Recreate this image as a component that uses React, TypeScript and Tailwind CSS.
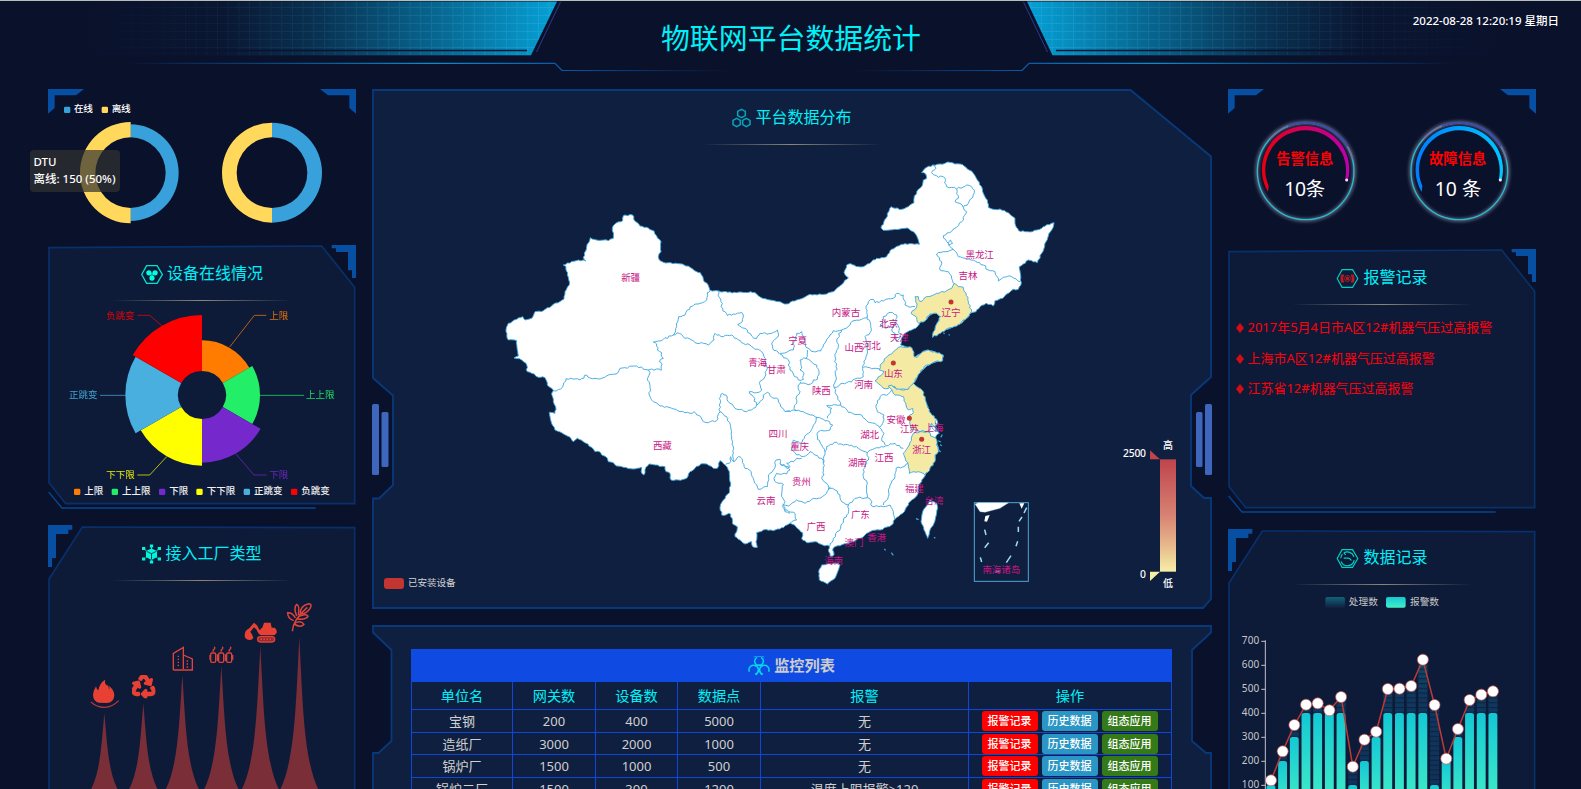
import React from "react";
import { FaRecycle } from "react-icons/fa";

const CYAN = "#00f0f8";

type TProps = {
  x: number;
  y: number;
  s: number;
  c: string;
  w?: number;
  a?: "start" | "middle" | "end";
  b?: number;
  children: string;
};

function T({ x, y, s, c, w, a = "start", b = 400, children }: TProps) {
  return (
    <text x={x} y={y} fontSize={s} fill={c} fontWeight={b} textAnchor={a} textLength={w} dominantBaseline="central">
      {children}
    </text>
  );
}

function HeaderArt() {
  const fade = (id: string, color: string, dir: number) => (
    <linearGradient id={id} x1={dir > 0 ? "0" : "1"} x2={dir > 0 ? "1" : "0"} y1="0" y2="0">
      <stop offset="0" stopColor={color} stopOpacity="0" />
      <stop offset="0.3" stopColor={color} stopOpacity="0.04" />
      <stop offset="0.5" stopColor={color} stopOpacity="0.23" />
      <stop offset="0.72" stopColor={color} stopOpacity="0.55" />
      <stop offset="1" stopColor={color} stopOpacity="1" />
    </linearGradient>
  );
  return (
    <svg className="absolute inset-0" width="1581" height="88" viewBox="0 1 1581 88" fill="none">
      <defs>
        {fade("hl", "#05a1d6", 1)}
        {fade("hr", "#05a1d6", -1)}
        <pattern id="grid" width="10.7" height="8" patternUnits="userSpaceOnUse" y="7" x="3">
          <path d="M0 .5H10.7M.5 0V8" stroke="#7fd6ff" strokeOpacity="0.16" />
        </pattern>
        <linearGradient id="maskL">
          <stop offset="0" stopColor="#fff" stopOpacity="0" />
          <stop offset="1" stopColor="#fff" />
        </linearGradient>
        <linearGradient id="maskR">
          <stop offset="0" stopColor="#fff" />
          <stop offset="1" stopColor="#fff" stopOpacity="0" />
        </linearGradient>
        <mask id="ml">
          <rect x="80" y="0" width="478" height="60" fill="url(#maskL)" />
        </mask>
        <mask id="mr">
          <rect x="1025" y="0" width="478" height="60" fill="url(#maskR)" />
        </mask>
        <linearGradient id="lineL" gradientUnits="userSpaceOnUse" x1="128" x2="560" y1="0" y2="0">
          <stop offset="0" stopColor="#0a4a9c" stopOpacity="0" />
          <stop offset="0.2" stopColor="#0a3f80" stopOpacity="0.7" />
          <stop offset="0.7" stopColor="#0790cc" />
          <stop offset="1" stopColor="#0b59a6" />
        </linearGradient>
        <linearGradient id="lineR" gradientUnits="userSpaceOnUse" x1="1455" x2="1024" y1="0" y2="0">
          <stop offset="0" stopColor="#0a4a9c" stopOpacity="0" />
          <stop offset="0.2" stopColor="#0a3f80" stopOpacity="0.7" />
          <stop offset="0.7" stopColor="#0790cc" />
          <stop offset="1" stopColor="#0b59a6" />
        </linearGradient>
        <linearGradient id="lowL" gradientUnits="userSpaceOnUse" x1="562" x2="735" y1="0" y2="0">
          <stop offset="0" stopColor="#0b59a6" />
          <stop offset="1" stopColor="#0b3f8a" stopOpacity="0" />
        </linearGradient>
        <linearGradient id="lowR" gradientUnits="userSpaceOnUse" x1="1022" x2="849" y1="0" y2="0">
          <stop offset="0" stopColor="#0b59a6" />
          <stop offset="1" stopColor="#0b3f8a" stopOpacity="0" />
        </linearGradient>
      </defs>
      <path d="M80 1.500H557L531 55.300H80Z" fill="url(#hl)" />
      <path d="M80 1.500H557L531 55.300H80Z" fill="url(#grid)" mask="url(#ml)" />
      <path d="M90 50.500H527" stroke="#0a1230" strokeWidth="1.600" />
      <path d="M560.500 2L536.500 52" stroke="#2b3a8c" />
      <path d="M128 63.400H555L562 70.500" stroke="url(#lineL)" strokeWidth="1.200" />
      <path d="M562 70.500L735 70.600" stroke="url(#lowL)" strokeWidth="1.200" />
      <path d="M1503 1.500H1027L1052.500 55.300H1503Z" fill="url(#hr)" />
      <path d="M1503 1.500H1027L1052.500 55.300H1503Z" fill="url(#grid)" mask="url(#mr)" />
      <path d="M1056 50.500H1493" stroke="#0a1230" strokeWidth="1.600" />
      <path d="M1023.500 2L1047.500 52" stroke="#2b3a8c" />
      <path d="M1455 63.400H1029L1022 70.500" stroke="url(#lineR)" strokeWidth="1.200" />
      <path d="M1022 70.500L849 70.600" stroke="url(#lowR)" strokeWidth="1.200" />
    </svg>
  );
}

function Corners({ h }: { h: number }) {
  return (
    <svg className="absolute inset-0" width="308" height={h} viewBox={`0 0 924 ${h * 3}`} fill="#064fa2">
      <path d="M0 0H108L84 19H20V57L0 74Z" />
      <path d="M924 0H816L840 19H904V57L924 74Z" />
    </svg>
  );
}

function FrameA() {
  return (
    <svg className="absolute inset-0" width="308" height="264" viewBox="24 30 924 792" fill="none">
      <path d="M27 38L845 33L944 157V806H77L27 743Z" fill="#0d1b39" stroke="#08316a" strokeWidth="5" />
      <path d="M26 771L66 819H827" stroke="#064690" strokeWidth="4" />
      <path d="M875 30H948V129H936V106H924V51H888V40H875Z" fill="#064fa2" />
    </svg>
  );
}

function FrameB() {
  return (
    <svg className="absolute inset-0" width="308" height="280" viewBox="24 30 924 840" fill="none">
      <path d="M127 36L944 38V920H27V192Z" fill="#0d1b39" stroke="#08316a" strokeWidth="5" />
      <path d="M24 30H97V44H85V57H48V129H36V156H24Z" fill="#064fa2" />
    </svg>
  );
}

function Title({ icon, text }: { icon: React.ReactNode; text: string }) {
  return (
    <div className="flex h-[56px] flex-col justify-between pt-[16px]">
      <div className="flex h-6 items-center justify-center gap-1">
        <span className="pt-[2px]">{icon}</span>
        <h2 className="text-[16px] leading-6 text-[#00f0f8]">{text}</h2>
      </div>
      <div className="mx-auto h-px w-[180px] bg-linear-to-r from-transparent via-[#8b8677] to-transparent" />
    </div>
  );
}

const HEX = "M17 2H49L65 29L49 56H17L2 29Z";

const HexDots = () => (
  <svg width="22" height="19" viewBox="0 0 67 58" fill="none">
    <path d={HEX} stroke="#00e3cf" strokeWidth="4" />
    <g fill="#00ffe0">
      <circle cx="24" cy="24" r="8" />
      <circle cx="43" cy="24" r="8" />
      <circle cx="33.500" cy="40" r="8" />
      <path d="M24 24H43L33 40Z" opacity=".6" />
    </g>
  </svg>
);

const CubeIcon = () => (
  <svg width="19" height="20" viewBox="0 0 58 58" fill="#00f5dc" stroke="#00f5dc">
    <path d="M29 8V50M6 14L52 44M52 14L6 44" strokeWidth="3" strokeDasharray="7 3" />
    <path d="M24 0h10v9H24zM24 49h10v9H24zM0 8h10v9H0zM48 8h10v9H48zM0 40h10v9H0zM48 40h10v9H48z" stroke="none" />
    <path d="M29 12L46 20V38L29 47L12 38V20Z" stroke="none" />
    <path d="M14 21L29 28L44 21M29 28V46" stroke="#0d1b39" strokeWidth="2.500" fill="none" />
  </svg>
);

const AlarmIcon = () => (
  <svg width="23" height="19" viewBox="0 0 67 58" fill="none">
    <path d={HEX} stroke="#00cfc4" strokeWidth="3.500" />
    <g stroke="#b81d22" strokeWidth="4">
      <circle cx="33.500" cy="29" r="3" fill="#b81d22" />
      <circle cx="33.500" cy="29" r="9" strokeWidth="3" />
      <path d="M22 17Q15 29 22 41M45 17Q52 29 45 41M17 16Q11 29 17 42M50 16Q56 29 50 42" />
    </g>
  </svg>
);

const RecordIcon = () => (
  <svg width="23" height="19" viewBox="0 0 67 58" fill="none" stroke="#00d0c2" strokeWidth="3.500">
    <path d={HEX} />
    <path d="M22 12A21 21 0 0 1 53 24M54 34A21 21 0 0 1 14 38M13 28A21 21 0 0 1 18 16M22 28H36Q42 28 45 35M22 12L28 18" />
  </svg>
);

const TriHex = () => (
  <svg width="19" height="20" viewBox="0 0 57 58" fill="none" stroke="#07a5bd" strokeWidth="4.500">
    <path d="M28.500 3L40 9V22L28.500 28L17 22V9Z" />
    <path d="M14 30L25 36V49L14 55L3 49V36Z" />
    <path d="M43 30L54 36V49L43 55L32 49V36Z" />
  </svg>
);

const Rings = () => (
  <svg width="22" height="20" viewBox="0 0 66 60" fill="none" stroke="#06d5ea" strokeWidth="4.500">
    <path d="M27 4A13 13 0 1 0 39 4" />
    <path d="M17 3Q25 -1 33 2Q41 -1 49 3" strokeWidth="2" />
    <path d="M4 47A14 14 0 1 1 21 55" />
    <path d="M62 47A14 14 0 1 0 45 55" />
    <path d="M22 31Q33 22 44 31M25 57Q33 46 33 36Q33 46 41 57" strokeWidth="3.500" />
  </svg>
);

function sector(cx: number, cy: number, r0: number, r1: number, a0: number, a1: number) {
  const p = (r: number, a: number) => {
    const t = ((a - 90) * Math.PI) / 180;
    return `${(cx + r * Math.cos(t)).toFixed(2)} ${(cy + r * Math.sin(t)).toFixed(2)}`;
  };
  return `M${p(r0, a0)}L${p(r1, a0)}A${r1} ${r1} 0 0 1 ${p(r1, a1)}L${p(r0, a1)}A${r0} ${r0} 0 0 0 ${p(r0, a0)}Z`;
}

function Donuts() {
  return (
    <section className="relative h-[156px] shrink-0">
      <Corners h={156} />
      <svg className="relative block" width="308" height="156" viewBox="84 27 924 468">
        <rect x="132" y="80" width="19" height="19" rx="4" fill="#38a1db" />
        <T x={162} y={85} s={29} w={57} b={500} c="#fff">在线</T>
        <rect x="245" y="80" width="19" height="19" rx="4" fill="#ffd85c" />
        <T x={275} y={85} s={29} w={57} b={500} c="#fff">离线</T>
        <path d={sector(331, 278, 106, 145, 0, 180)} fill="#38a1db" />
        <path d={sector(332, 278, 106, 152, 180, 360)} fill="#ffd85c" />
        <path d={sector(756, 278, 106, 150, 0, 180)} fill="#38a1db" />
        <path d={sector(756, 278, 106, 150, 180, 360)} fill="#ffd85c" />
      </svg>
      <div className="absolute top-[61px] left-[-18px] h-[42px] w-[90px] rounded bg-[#323232]/70 px-[3.500px] pt-[3px] text-[11.500px] leading-[17.300px] font-medium whitespace-nowrap text-white">
        <div>DTU</div>
        <div>离线: 150 (50%)</div>
      </div>
    </section>
  );
}

const ROSE = [
  { n: "上限", r: 164, c: "#ff7c00", lx: 688, ly: 240, d: "M569 336L643 241H679", sx: 102 },
  { n: "上上限", r: 174, c: "#22ee68", lx: 798, ly: 478, d: "M660 481H792", sx: 215 },
  { n: "下限", r: 203, c: "#7528cb", lx: 688, ly: 717, d: "M587 656L642 720H680", sx: 357 },
  { n: "下下限", r: 212, c: "#ffff00", lx: 199, ly: 717, d: "M380 665L329 720H292", sx: 469 },
  { n: "正跳变", r: 230, c: "#48afde", lx: 87, ly: 478, d: "M257 481H180", sx: 611 },
  { n: "负跳变", r: 240, c: "#ff0000", lx: 199, ly: 240, d: "M365 272L329 241H292", sx: 753 },
];

function RosePanel() {
  return (
    <section className="relative h-[264px] shrink-0">
      <FrameA />
      <div className="relative">
        <Title icon={<HexDots />} text="设备在线情况" />
        <svg className="block" width="308" height="204" viewBox="24 198 924 612">
          {ROSE.map((s, i) => (
            <g key={s.n}>
              <path d={sector(486, 480, 72, s.r, i * 60, i * 60 + 60)} fill={s.c} />
              <path d={s.d} fill="none" stroke={s.c} strokeWidth="3" opacity="0.7" />
              <g opacity="0.9">
                <T x={s.lx} y={s.ly} s={28.5} w={s.n.length * 28.5} c={s.c}>{s.n}</T>
              </g>
              <rect x={s.sx} y="761" width="19" height="19" rx="4" fill={s.c} />
              <T x={s.sx + 31} y={767} s={28.5} w={s.n.length * 28.5} b={500} c="#f2f2f2">{s.n}</T>
            </g>
          ))}
        </svg>
      </div>
    </section>
  );
}

const SPIKES = [
  [193, 595],
  [310, 565],
  [427, 480],
  [544, 452],
  [661, 393],
  [778, 366],
];

function FactoryPanel() {
  const B = 880;
  return (
    <section className="relative h-[264px] shrink-0 overflow-hidden">
      <FrameB />
      <div className="relative">
        <Title icon={<CubeIcon />} text="接入工厂类型" />
        <svg className="block" width="308" height="224" viewBox="24 198 924 672" fill="none">
          {SPIKES.map(([x, y]) => {
            const h = B - y;
            return (
              <path
                key={x}
                fill="#792e38"
                d={`M${x - 134.5} ${B}H${x + 134.5}C${x + 13.45} ${B} ${x + 13.45} ${y + h / 2} ${x} ${y}C${x - 13.45} ${y + h / 2} ${x - 13.45} ${B} ${x - 134.5} ${B}Z`}
              />
            );
          })}
          <path d="M176 563Q160 560 159 540Q160 527 168 514Q169 522 175 526Q178 505 195 494Q193 505 200 512Q199 508 202 510Q208 516 207 524Q210 518 206 512Q222 522 223 542Q221 562 200 564Z" fill="#e84133" />
          <path d="M153 561Q170 577 193 577Q217 577 236 557" stroke="#b23a38" strokeWidth="3.500" />
          <FaRecycle x={276} y={480} size={70} color="#e84133" stroke="#e84133" strokeWidth={34} />
          <g stroke="#e0443a" strokeWidth="4">
            <path d="M400 465V415L430 397V462M430 420L457 432V465H400" />
            <path d="M415 422V458M442 436V458" strokeDasharray="4 5" />
          </g>
          <g stroke="#d9433a" strokeWidth="4">
            {[520, 544, 568].map((x) => (
              <g key={x}>
                <rect x={x - 8} y="414" width="15" height="28" rx="4" />
                <path d={`M${x} 410Q${x - 2} 404 ${x + 3} 402Q${x + 6} 399 ${x + 3} 395`} />
              </g>
            ))}
            <path d="M510 420V434M532 418V438M556 418V438M578 420V434" />
          </g>
          <path d="M614 362Q614 346 628 340L642 323L651 331L659 346L668 336L672 323H692L695 338H704Q712 344 710 353Q706 362 695 361H664Q655 358 650 344L642 337L631 350Q637 358 640 369Q636 376 628 375Q614 372 614 362Z" fill="#e84133" />
          <rect x="653" y="365" width="51" height="16" rx="8" fill="#802c38" stroke="#e84133" strokeWidth="4" />
          <path d="M661 373H698" stroke="#e84133" strokeWidth="6" strokeDasharray="5 4" />
          <g stroke="#e0443a" strokeWidth="4.500">
            <path d="M757 349Q758 315 802 277" />
            <path d="M781 297Q780 272 806 266Q818 266 810 280Q800 297 781 297Z" />
            <path d="M770 303Q760 278 770 268Q780 272 775 300" />
            <path d="M761 317Q742 310 743 293Q758 292 766 309" />
            <path d="M775 305Q800 294 804 304Q796 316 770 311" />
            <path d="M763 325Q782 314 792 328Q782 340 762 327" />
          </g>
        </svg>
      </div>
    </section>
  );
}

const MAP_DX = 870;
type Pt = [number, number];

function pts(s: string, dx = 0): Pt[] {
  return s
    .trim()
    .split(/\s+/)
    .map((p) => {
      const [x, y] = p.split(",").map(Number);
      return [x + dx, y] as Pt;
    });
}

function rough(list: Pt[], closed: boolean, amp = 2.6): string {
  const out: string[] = [];
  const n = closed ? list.length : list.length - 1;
  const rnd = (x: number, y: number) => {
    const v = Math.sin(x * 12.9898 + y * 78.233) * 43758.5453;
    return v - Math.floor(v) - 0.5;
  };
  for (let i = 0; i < n; i++) {
    const [ax, ay] = list[i];
    const [bx, by] = list[(i + 1) % list.length];
    const len = Math.hypot(bx - ax, by - ay);
    const k = Math.max(1, Math.round(len / 7));
    for (let j = 0; j < k; j++) {
      const t = j / k;
      const x = ax + (bx - ax) * t;
      const y = ay + (by - ay) * t;
      const o = j === 0 ? 0 : rnd(Math.round(x), Math.round(y)) * 2 * amp;
      out.push(`${(x + ((by - ay) / len) * o).toFixed(1)} ${(y - ((bx - ax) / len) * o).toFixed(1)}`);
    }
  }
  if (!closed) out.push(list[list.length - 1].join(" "));
  return "M" + out.join("L") + (closed ? "Z" : "");
}

const OUT_NW =
  "405,195 428,195 431,207 450,228 475,234 492,243 500,258 513,275 513,305 505,320 510,332 528,339 577,342 600,352 620,365 631,368 640,388 657,412 660,421 682,422 700,425 740,428 782,425 800,432 812,442 840,450 868,455";
const OUT_E =
  "0,455 20,462 50,450 90,433 140,432 160,425 182,406 205,383 192,367 200,345 212,341 235,350 250,350 275,335 290,325 320,320 330,302 358,287 375,281 418,283 415,270 400,245 382,234 360,237 330,240 310,241 303,234 318,205 333,170 345,175 365,178 390,165 402,158 402,145 415,118 428,103 430,90 440,85 437,72 425,68 435,55 458,45 480,42 510,37 540,42 558,52 580,70 592,90 605,110 608,125 622,150 625,172 640,178 660,177 685,188 705,205 705,220 716,242 735,245 757,245 785,235 800,224 822,218 815,240 805,258 798,275 785,310 772,338 755,332 745,330 730,342 718,350 722,375 724,398 715,418 700,418 685,430 668,445 645,452 640,468 618,460 600,470 588,485 575,488 560,505 540,522 525,528 510,535 490,540 475,552 458,562 465,540 470,522 480,500 470,490 455,492 440,508 420,518 412,530 395,540 375,550 365,565 362,585 385,592 395,595 395,610 402,622 420,612 430,603 442,600 460,604 475,612 490,618 487,632 470,635 455,640 440,648 425,662 412,678 400,700 410,712 425,725 433,745 440,765 448,785 455,798 470,808 473,822 460,828 470,842 478,850 468,858 462,870 470,882 475,900 466,915 462,935 450,950 438,970 430,985 420,1000 412,1035 395,1050 380,1070 368,1090 345,1108 335,1125 300,1140 270,1145 255,1155 240,1165 210,1178 180,1187 165,1190 158,1200 162,1215 150,1218 145,1200 148,1188 128,1185 105,1175 80,1178 65,1165 68,1148 48,1130 30,1120 10,1133 0,1137";
const OUT_SW =
  "850,1142 820,1140 800,1148 798,1175 802,1192 788,1190 785,1175 765,1182 750,1170 735,1160 742,1130 728,1122 722,1092 695,1095 690,1072 700,1050 718,1028 722,1000 718,965 705,945 690,932 682,955 670,955 650,942 632,942 615,955 600,965 590,985 565,990 543,990 540,970 528,965 525,950 495,945 478,942 468,952 462,975 455,970 455,952 430,957 400,952 380,948 370,938 355,935 352,925 335,915 328,905 315,905 305,892 280,875 262,865 250,875 238,860 215,848 195,840 187,825 180,800 178,787 195,790 198,778 190,755 185,730 190,722 172,705 165,683 145,682 125,670 112,665 108,640 95,630 72,624 85,618 82,600 80,572 55,570 48,545 55,520 80,508 98,500 105,510 125,505 135,485 160,482 185,467 222,447 225,425 238,405 232,375 228,350 220,345 265,330 287,333 280,322 290,290 301,263 320,270 355,272 370,265 367,235 375,222 398,212 400,197";

const OUTLINE = rough([...pts(OUT_NW), ...pts(OUT_E, MAP_DX), ...pts(OUT_SW)], true, 2.2);

const WEST_BORDERS = [
  "660,421 652,428 650,450 630,460 612,464 592,480 585,495 566,500 560,530 550,555",
  "550,555 520,568 490,576 500,582 502,600 515,608 520,625 508,635 516,643 514,661 485,657 475,660",
  "475,660 440,648 390,655 378,672 355,675 330,687 300,684 290,675 270,690 228,686 212,717 190,722",
  "475,660 480,668 472,690 480,710 478,735 490,755 510,768 530,770 570,785 600,790 612,785 632,800 640,815 655,818 680,812 682,800 690,785",
  "690,785 710,800 722,830 725,860 730,890 728,915 732,935",
  "732,935 722,920 718,940 706,945",
  "690,785 688,745 698,730 708,735 720,760 735,775 755,778 770,785 785,780 800,765",
  "550,555 568,550 585,565 605,570 615,578 640,580 655,585 672,570 675,550 700,560 725,555 745,570 760,580 780,585 795,598 815,605 822,620 832,655 825,680 808,700 815,720 800,728 778,725 790,740 800,765",
  "800,765 820,745 820,735 832,727 845,742 865,748 872,770 885,785 900,783",
  "682,422 697,460 693,470 712,497 730,492 755,487 760,495 757,515 743,524 765,535 785,558 800,566 810,550 845,550 862,540 866,555 848,575 848,595 868,612",
  "732,935 745,920 755,925 765,955 778,960 790,985 805,1018 820,1012 832,1010 835,975 850,960 858,930 870,928 875,945 895,950 900,960 890,972 860,970 852,985 860,998 880,1003 875,1040 885,1055 878,1070 885,1085 900,1090",
];

const EAST_BORDERS = [
  "0,610 40,600 42,575 50,550 65,545 70,560 75,575 78,592 90,598",
  "0,612 25,630 30,660 40,672 55,690 70,688 72,670 60,660 65,650 60,630 78,625 82,600",
  "78,625 110,645 117,665 112,688 100,690 92,702 62,700",
  "62,695 55,705 60,725 48,745 50,760 42,775 48,782",
  "20,783 30,785 48,782",
  "90,598 100,605 122,603 130,585 150,555 160,542 185,540",
  "185,540 170,570 175,590 165,620 168,650 168,680 162,712",
  "185,540 210,525 222,512 245,508 262,500",
  "262,500 272,530 270,548 255,560 262,590 258,620 248,655 250,680",
  "162,712 200,698 240,685 250,680",
  "250,652 275,656 300,658",
  "262,500 258,475 265,455 280,448 285,458 310,453 340,445 350,430 370,435 375,465 390,472 405,470",
  "162,712 170,735 182,765",
  "182,765 140,767 155,775 142,805",
  "48,782 70,785 105,800 142,812",
  "182,765 205,787 245,795 260,812 290,825 298,832",
  "298,832 308,820 312,795 292,785 288,765 300,740 325,732 335,720",
  "298,832 312,850 305,865 315,885",
  "110,800 105,820 95,838 85,850 68,870 60,880 40,870 35,900 50,915 70,920 90,905 105,915 125,925 130,940",
  "142,812 158,825 150,840 115,845 112,868 125,885 135,905 130,940",
  "0,940 20,955 30,950 20,940 40,935 50,925 65,925",
  "8,1065 25,1068 50,1050 75,1060 95,1048 115,1045 140,1030 150,1010",
  "130,940 132,975 125,985 140,1000 145,1020",
  "8,1065 15,1080 45,1090 50,1110 30,1120",
  "135,905 140,890 170,877 190,885 215,885 235,895 255,905 262,908",
  "262,908 290,893 318,887",
  "262,908 265,930 255,945 250,980 262,1000 262,1043",
  "150,1015 165,1020 180,1035 185,1055 205,1065 225,1045 262,1043 272,1050",
  "205,1065 205,1090 190,1110 182,1135 160,1165 150,1188",
  "272,1050 275,1068 310,1070 330,1065",
  "310,1065 325,1040 330,1005 345,980 348,955 375,948 385,940",
  "330,1065 340,1085 345,1108",
  "318,887 345,880 370,895",
  "458,45 468,55 455,68 475,82 490,80 500,110 530,117 560,105 575,110 583,128 565,160 550,172 560,185 545,215 525,235 490,257 500,275 510,290 520,298",
  "530,117 535,145 525,155 540,160 550,172",
  "505,285 518,280 512,270 505,280",
  "520,298 535,320 560,328 580,330 610,345 625,360 645,365 655,393 670,382 695,380 720,395",
  "520,298 490,305 470,312 485,335 480,360 505,365 515,385 520,400",
  "310,500 330,487 350,495 348,515 340,530 318,535 300,525 315,515 310,500",
  "350,520 358,535 360,560 350,575 345,550 335,540 350,520",
  "452,820 460,838 475,845 455,815",
];

const BORDERS = [
  ...WEST_BORDERS.map((s) => rough(pts(s), false, 3.2)),
  ...EAST_BORDERS.map((s) => rough(pts(s, MAP_DX), false, 3.2)),
].join("");

const COASTAL = [
  "522,400 535,410 550,412 558,430 565,455 575,485 560,503 540,522 510,533 475,552 458,562 460,545 470,522 482,500 470,490 450,492 435,512 417,520 405,498 393,490 410,470 405,440 415,440 420,455 440,440 470,430 500,422 515,415",
  "300,645 320,622 340,605 362,590 390,590 398,600 402,620 412,622 428,605 445,600 490,615 488,632 465,635 440,645 420,668 400,700 385,718 355,720 345,710 310,715 285,692 312,665 298,660",
  "335,705 350,718 385,718 400,700 428,722 440,760 448,785 470,808 465,830 455,820 450,840 420,845 395,838 385,800 400,788 398,775 385,780 378,765 370,740 345,735 325,708",
  "400,850 420,845 450,848 452,858 468,865 470,885 475,905 465,915 465,935 450,955 435,975 415,965 388,970 385,945 370,910 388,885",
].map((s) => rough(pts(s, MAP_DX), true));

const ISLANDS = [
  "125,1245 150,1240 175,1240 180,1245 165,1285 142,1302 118,1290 116,1265",
  "470,1060 473,1075 462,1120 450,1140 443,1165 435,1145 423,1115 428,1085 450,1050",
].map((s) => rough(pts(s, MAP_DX), true, 1.2));

const LABELS: [string, number, number][] = [
  ["新疆", 422, 382],
  ["青海", 803, 638],
  ["甘肃", 859, 658],
  ["四川", 864, 852],
  ["西藏", 517, 887],
  ["云南", 828, 1052],
  ["黑龙江", 1469, 313],
  ["吉林", 1434, 377],
  ["辽宁", 1383, 487],
  ["内蒙古", 1068, 488],
  ["北京", 1196, 521],
  ["天津", 1228, 562],
  ["宁夏", 923, 571],
  ["山西", 1092, 593],
  ["河北", 1144, 586],
  ["山东", 1210, 670],
  ["河南", 1121, 704],
  ["陕西", 994, 722],
  ["安徽", 1218, 809],
  ["江苏", 1258, 836],
  ["上海", 1332, 832],
  ["湖北", 1139, 855],
  ["重庆", 929, 891],
  ["浙江", 1295, 898],
  ["湖南", 1102, 939],
  ["江西", 1182, 922],
  ["贵州", 934, 996],
  ["福建", 1273, 1016],
  ["台湾", 1332, 1052],
  ["广东", 1111, 1095],
  ["广西", 978, 1131],
  ["香港", 1160, 1162],
  ["澳门", 1092, 1178],
  ["海南", 1031, 1232],
  ["南海诸岛", 1534, 1258],
];

function ChinaMap() {
  return (
    <svg className="block" width="840" height="464" viewBox="-354 -15 2520 1392" fill="none">
      <defs>
        <linearGradient id="vm" x1="0" x2="0" y1="0" y2="1">
          <stop offset="0" stopColor="#bf444c" />
          <stop offset="0.5" stopColor="#d88273" />
          <stop offset="0.75" stopColor="#e6b58a" />
          <stop offset="1" stopColor="#f6efa6" />
        </linearGradient>
      </defs>
      <g strokeLinejoin="round" stroke="#3fa9e2" strokeWidth="2.800">
        <path d={OUTLINE} fill="#fff" />
        {ISLANDS.map((d) => (
          <path key={d} d={d} fill="#fff" />
        ))}
        <path d={BORDERS} />
        {COASTAL.map((d) => (
          <path key={d} d={d} fill="#f4eaa3" />
        ))}
        <path d="M1345 872l8 4M1350 884l6 3M1352 862l5 -8M1346 900l6 6M1278 1106l8 3M1204 1208l6 8M1183 1197l4 4M1332 1162l4 3M1360 548l4 3M1376 553l3 3" strokeWidth="3.500" />
      </g>
      <g>
        <rect x="1453" y="1058" width="162" height="236" stroke="#4fa6d6" strokeWidth="3" />
        <path d="M1455 1062L1465 1058H1556L1530 1075L1485 1087L1470 1085Z" fill="#fff" stroke="#8fd0f0" />
        <path d="M1588 1060H1603L1595 1076Z M1486 1098L1499 1095L1491 1115L1483 1114Z" fill="#fff" />
        <path d="M1610 1073L1602 1089M1596 1101L1587 1114M1585 1130V1146M1583 1174L1578 1189M1563 1217L1549 1238M1484 1139L1488 1155M1496 1178L1484 1193M1471 1222L1475 1236" stroke="#9fdcf5" strokeWidth="4.500" />
        <path d="M1515 1268L1530 1262" stroke="#4fa6d6" strokeWidth="4" />
      </g>
      {LABELS.map(([n, x, y]) => (
        <T key={n} x={x} y={y - 1} s={28.5} w={n.length * 28.3} a="middle" c="#c71585">{n}</T>
      ))}
      <g fill="#c23531">
        <circle cx="1383" cy="456" r="7.500" />
        <circle cx="1210" cy="639" r="7.500" />
        <circle cx="1258" cy="805" r="7.500" />
        <circle cx="1295" cy="868" r="7.500" />
      </g>
      <rect x="-318" y="1284" width="60" height="33" rx="9" fill="#c23531" />
      <T x={-246} y={1296} s={28.8} w={143} c="#d2d2d2">已安装设备</T>
      <rect x="2010" y="928" width="48" height="337" fill="url(#vm)" />
      <path d="M1980 901V928H2010Z" fill="#bf444c" />
      <path d="M1980 1265H2010L1980 1293Z" fill="#f6efa6" />
      <T x={2034} y={886} s={30} b={500} a="middle" c="#fff">高</T>
      <T x={2034} y={1298} s={30} b={500} a="middle" c="#fff">低</T>
      <T x={1968} y={910} s={31} w={69} b={500} a="end" c="#fff">2500</T>
      <T x={1968} y={1273} s={31} b={500} a="end" c="#fff">0</T>
    </svg>
  );
}

function MapPanel() {
  return (
    <section className="relative h-[520px] shrink-0">
      <svg className="absolute inset-0" width="840" height="520" viewBox="0 0 840 520" fill="none">
        <path
          d="M1 1H758.500L839 67.500V288L819 306V397L832 409H839V510L831 519H1V409.500H7L21 396V306.500L1 289Z"
          fill="#0f1f3f"
          stroke="#08397a"
          strokeWidth="1.800"
        />
        <g fill="#3d66bc">
          <rect x="0" y="315" width="7" height="71" rx="1.500" />
          <rect x="9.500" y="323" width="7" height="55" rx="1.500" />
          <rect x="824" y="323" width="6.500" height="55" rx="1.500" />
          <rect x="833" y="315" width="7" height="71" rx="1.500" />
        </g>
      </svg>
      <div className="relative">
        <Title icon={<TriHex />} text="平台数据分布" />
        <ChinaMap />
      </div>
    </section>
  );
}

const ROWS = [
  ["宝钢", "200", "400", "5000", "无"],
  ["造纸厂", "3000", "2000", "1000", "无"],
  ["锅炉厂", "1500", "1000", "500", "无"],
  ["锅炉二厂", "1500", "300", "1200", "温度上限报警>120"],
];

const GRID = "grid grid-cols-[101px_83px_82px_83px_208px_202px] divide-x divide-[#1147d9] border-x border-b border-[#1147d9]";

function TablePanel() {
  return (
    <section className="relative h-[260px] shrink-0 px-[39px] pt-6">
      <svg className="absolute inset-0" width="840" height="260" viewBox="0 0 840 260" fill="none">
        <path
          d="M1 1H839V7.500L820 25V116L834 128H839V262H1V128H6.500L19.500 116V25L1 7.500Z"
          fill="#0f1f3f"
          stroke="#08397a"
          strokeWidth="1.800"
        />
      </svg>
      <div className="relative w-[761px] text-[13px] text-[#d0d0d0]">
        <div className="flex h-[33px] items-center justify-center gap-1 bg-[#0f4be3] text-[15.200px] font-semibold text-[#ccc]">
          <Rings />
          <span>监控列表</span>
        </div>
        <div className={`${GRID} h-[28px] text-center text-[14.200px] leading-[27px] text-[#00f0f8]`}>
          {["单位名", "网关数", "设备数", "数据点", "报警", "操作"].map((h) => (
            <div key={h}>{h}</div>
          ))}
        </div>
        {ROWS.map((r) => (
          <div key={r[0]} className={`${GRID} h-[22.600px] text-center leading-[22px]`}>
            {r.map((c, i) => (
              <div key={i}>{c}</div>
            ))}
            <div className="flex items-center justify-center gap-1 pr-px text-[11px] leading-[19px] font-medium text-white">
              <span className="h-5 w-14 rounded-[3px] bg-[#ff0000]">报警记录</span>
              <span className="h-5 w-14 rounded-[3px] bg-[#2a96c5]">历史数据</span>
              <span className="h-5 w-14 rounded-[3px] bg-[#347a18]">组态应用</span>
            </div>
          </div>
        ))}
      </div>
    </section>
  );
}

function Gauge({ cx, id, from, to }: { cx: number; id: string; from: string; to: string }) {
  return (
    <g fill="none">
      <defs>
        <linearGradient id={id} x1="0" x2="1" y1="0" y2="0">
          <stop offset="0" stopColor={from} />
          <stop offset="1" stopColor={to} />
        </linearGradient>
      </defs>
      <circle cx={cx} cy="274" r="146" stroke="#8f93ab" strokeOpacity="0.5" strokeWidth="13" filter="url(#soft)" />
      <circle cx={cx} cy="274" r="145" stroke="#23bdd0" strokeWidth="4" />
      <path d={`M${cx - 108} 177A145 145 0 0 1 ${cx + 141} 238`} stroke="#6d6fa0" strokeWidth="5" />
      <path d={`M${cx - 52} 138A145 145 0 0 1 ${cx + 125} 199`} stroke="#3e4ba2" strokeWidth="7" />
      <path
        d={`M${cx - 113} 336A131 131 0 0 1 ${cx} 138A131 131 0 0 1 ${cx + 127} 301L${cx + 118} 300A121 121 0 0 0 ${cx} 151A119 119 0 0 0 ${cx - 111} 318Z`}
        fill={`url(#${id})`}
      />
      <circle cx={cx + 123} cy="300" r="4.500" fill="#f6e6ff" />
    </g>
  );
}

function GaugeBox() {
  return (
    <section className="relative h-[160px] shrink-0">
      <Corners h={160} />
      <svg className="relative block" width="308" height="160" viewBox="54 27 924 480">
        <defs>
          <filter id="soft" x="-20%" y="-20%" width="140%" height="140%">
            <feGaussianBlur stdDeviation="4" />
          </filter>
        </defs>
        <Gauge cx={287} id="g1" from="#e80012" to="#bb00ae" />
        <Gauge cx={748} id="g2" from="#007dff" to="#00c6ff" />
        <T x={199} y={236} s={43} w={171} b={700} c="#ff0000">告警信息</T>
        <T x={657} y={236} s={43} w={172} b={700} c="#ff0000">故障信息</T>
        <T x={223} y={324} s={58} w={122} c="#fff">10条</T>
        <T x={674} y={324} s={58} w={140} c="#fff">10 条</T>
      </svg>
    </section>
  );
}

function AlarmPanel() {
  return (
    <section className="relative h-[264px] shrink-0">
      <FrameA />
      <div className="relative">
        <Title icon={<AlarmIcon />} text="报警记录" />
        <ul className="flex flex-col pt-[8px] pl-2 text-[13px] tracking-[-0.02px] text-[#ff000a]">
          {["2017年5月4日市A区12#机器气压过高报警", "上海市A区12#机器气压过高报警", "江苏省12#机器气压过高报警"].map((t) => (
            <li key={t} className="flex h-[30.400px] items-center gap-[3.500px]">
              <svg width="8" height="10" viewBox="0 0 8 10" fill="#d30d12">
                <path d="M4 0L8 5L4 10L0 5Z" />
              </svg>
              <span className="whitespace-nowrap">{t}</span>
            </li>
          ))}
        </ul>
      </div>
    </section>
  );
}

const LINE_Y = [796, 709, 630, 569, 565, 586, 546, 755, 674, 650, 522, 521, 513, 434, 570, 731, 642, 555, 539, 529];
const BAR_V = [100, 200, 300, 400, 400, 400, 400, 100, 200, 300, 400, 400, 400, 400, 100, 200, 300, 400, 400, 400];
const colX = (i: number) => 183 + i * 35.05;

function DataPanel() {
  return (
    <section className="relative h-[260px] shrink-0 overflow-hidden">
      <FrameB />
      <div className="relative">
        <Title icon={<RecordIcon />} text="数据记录" />
        <svg className="block" width="308" height="224" viewBox="54 210 924 672" fill="none">
          <defs>
            <linearGradient id="bar" x1="0" x2="0" y1="0" y2="1">
              <stop offset="0" stopColor="#14c8d4" />
              <stop offset="1" stopColor="#43eec6" />
            </linearGradient>
            <linearGradient id="leg" x1="0" x2="0" y1="0" y2="1">
              <stop offset="0" stopColor="#11627a" />
              <stop offset="1" stopColor="#11203f" />
            </linearGradient>
            <linearGradient id="back" gradientUnits="userSpaceOnUse" x1="0" x2="0" y1="430" y2="820">
              <stop offset="0" stopColor="#0f4a66" />
              <stop offset="0.3" stopColor="#10385f" />
              <stop offset="1" stopColor="#10315a" />
            </linearGradient>
            <pattern id="stripe" width="30" height="14.400" patternUnits="userSpaceOnUse">
              <rect width="30" height="3.500" fill="#0d2440" />
            </pattern>
          </defs>
          <rect x="346" y="246" width="59" height="32" rx="6" fill="url(#leg)" />
          <T x={416} y={259} s={29} w={88} c="#c8c8c8">处理数</T>
          <rect x="528" y="246" width="59" height="32" rx="6" fill="url(#bar)" />
          <T x={600} y={259} s={29} w={87} c="#c8c8c8">报警数</T>
          <path d="M166 376V890" stroke="#c0c4cc" strokeWidth="3" />
          {[700, 600, 500, 400, 300, 200, 100].map((v, i) => (
            <g key={v}>
              <path d={`M154 ${379 + i * 72}H166`} stroke="#c0c4cc" strokeWidth="3" />
              <T x={148} y={374 + i * 72} s={30} w={53} a="end" c="#c8c8c8">{String(v)}</T>
            </g>
          ))}
          {LINE_Y.map((y, i) => (
            <g key={i}>
              <rect x={colX(i) - 13.5} y={y} width="27" height={882 - y} rx="3" fill="url(#back)" />
              <rect x={colX(i) - 13.5} y={y} width="27" height={882 - y} fill="url(#stripe)" />
              <rect x={colX(i) - 13.5} y={882 - BAR_V[i] * 0.72} width="26.500" height={BAR_V[i] * 0.72} rx="8" fill="url(#bar)" />
            </g>
          ))}
          <polyline points={LINE_Y.map((y, i) => `${colX(i)},${y}`).join(" ")} stroke="#bd3a35" strokeWidth="4.500" />
          {LINE_Y.map((y, i) => (
            <circle key={i} cx={colX(i)} cy={y} r="16.500" fill="#fff" stroke="#c8554f" strokeWidth="2" />
          ))}
        </svg>
      </div>
    </section>
  );
}

export default function App() {
  return (
    <div className="h-[789px] w-[1581px] overflow-hidden bg-[#0a112b] font-['Noto_Sans','Noto_Sans_CJK_SC',sans-serif] text-white">
      <header className="relative flex h-[89px] justify-center border-t border-[#b9bdb9]">
        <HeaderArt />
        <h1 className="relative pt-[16px] pl-px text-[28.900px] leading-[42px]" style={{ color: CYAN }}>
          物联网平台数据统计
        </h1>
        <div className="absolute top-3 right-[22px] text-[11.500px] leading-4 font-medium">2022-08-28 12:20:19 星期日</div>
      </header>
      <main className="flex h-[700px] gap-4 overflow-hidden pl-12">
        <div className="flex w-[308px] shrink-0 flex-col">
          <Donuts />
          <RosePanel />
          <div className="mt-4 shrink-0">
            <FactoryPanel />
          </div>
        </div>
        <div className="flex w-[840px] shrink-0 flex-col gap-4">
          <MapPanel />
          <TablePanel />
        </div>
        <div className="flex w-[308px] shrink-0 flex-col">
          <GaugeBox />
          <AlarmPanel />
          <div className="mt-4 shrink-0">
            <DataPanel />
          </div>
        </div>
      </main>
    </div>
  );
}
